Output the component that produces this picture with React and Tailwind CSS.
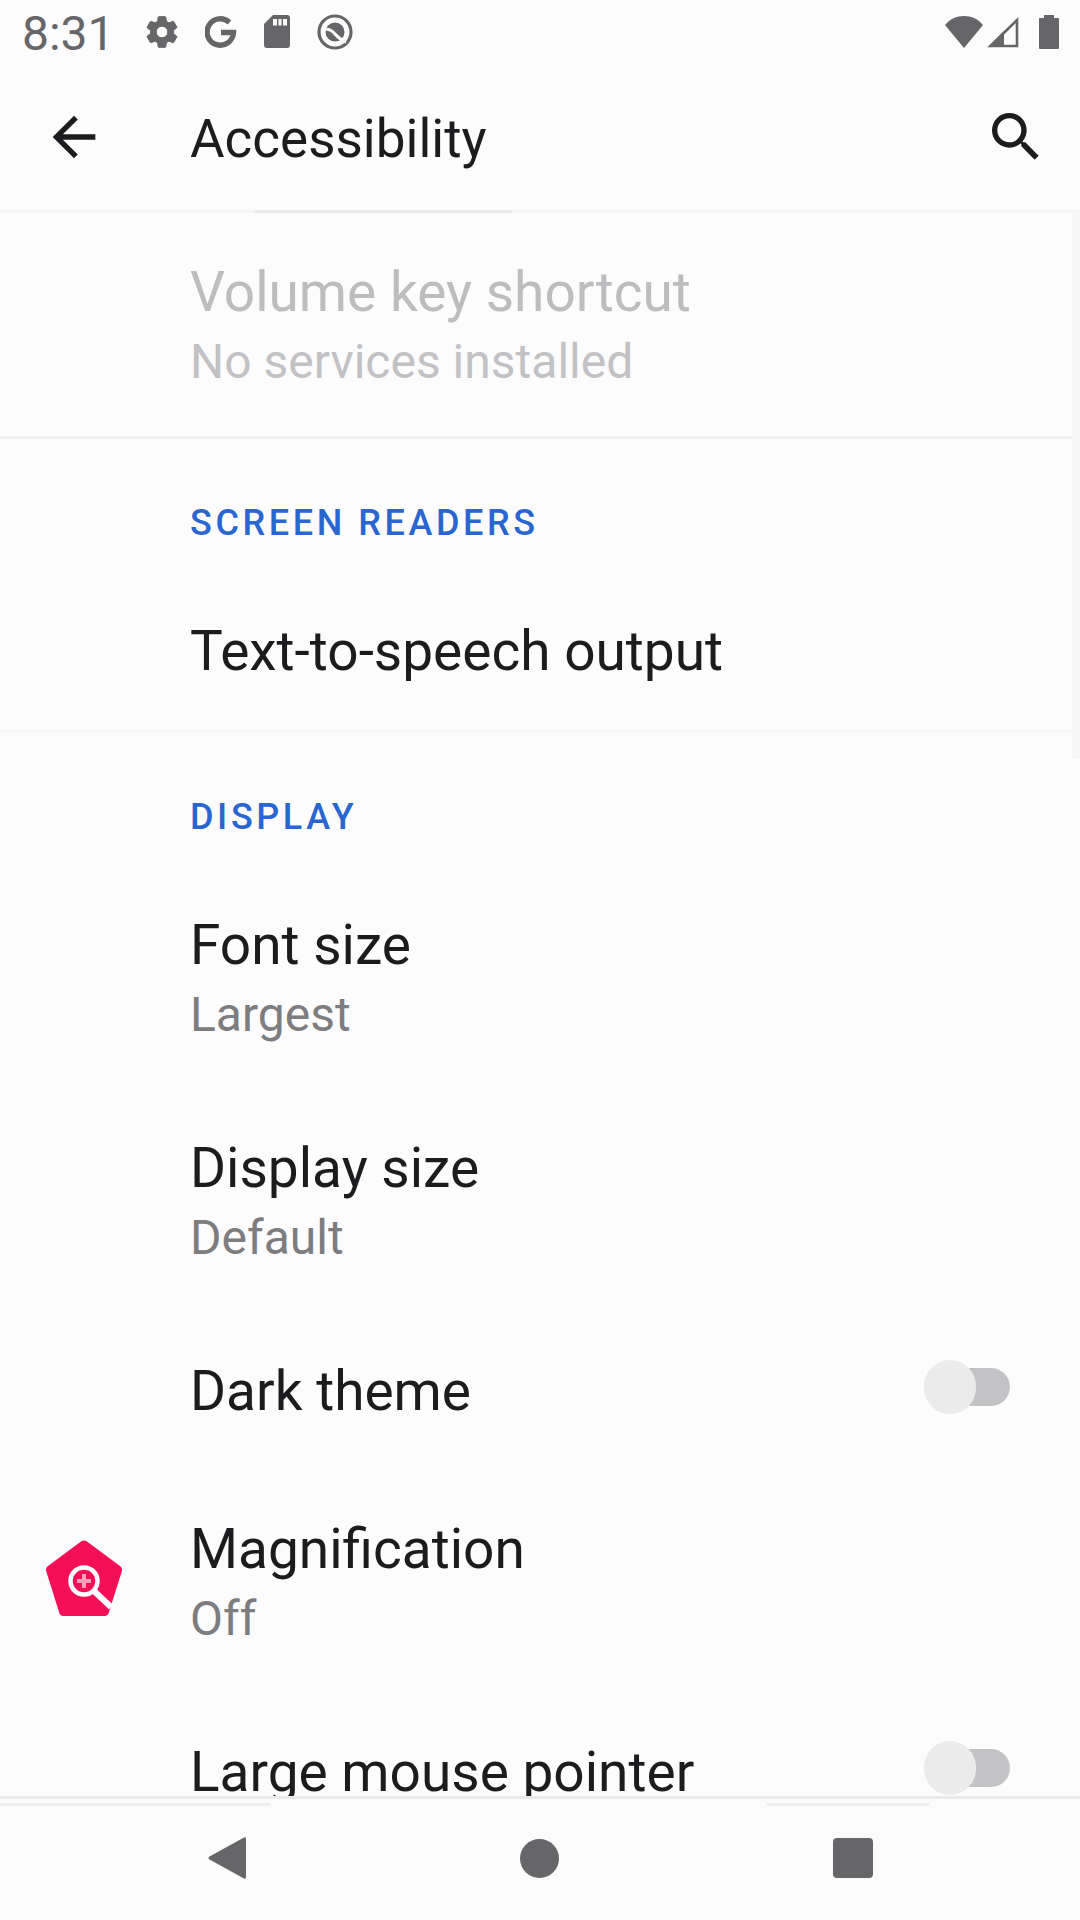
import React from "react";

const GearIcon = () => (
  <svg viewBox="2 2 20 20" className="h-8 w-8" fill="currentColor" stroke="currentColor" strokeWidth="0.6" aria-hidden="true">
    <path d="M19.14 12.94c.04-.3.06-.61.06-.94 0-.32-.02-.64-.07-.94l2.03-1.58c.18-.14.23-.41.12-.61l-1.92-3.32c-.12-.22-.37-.29-.59-.22l-2.39.96c-.5-.38-1.03-.7-1.62-.94l-.36-2.54c-.04-.24-.24-.41-.48-.41h-3.84c-.24 0-.43.17-.47.41l-.36 2.54c-.59.24-1.13.57-1.62.94l-2.39-.96c-.22-.08-.47 0-.59.22L2.74 8.87c-.12.21-.08.47.12.61l2.03 1.58c-.05.3-.09.63-.09.94s.02.64.07.94l-2.03 1.58c-.18.14-.23.41-.12.61l1.92 3.32c.12.22.37.29.59.22l2.39-.96c.5.38 1.03.7 1.62.94l.36 2.54c.05.24.24.41.48.41h3.84c.24 0 .44-.17.47-.41l.36-2.54c.59-.24 1.13-.56 1.62-.94l2.39.96c.22.08.47 0 .59-.22l1.92-3.32c.12-.22.07-.47-.12-.61l-2.01-1.58zM12 15.6c-1.98 0-3.6-1.62-3.6-3.6s1.62-3.6 3.6-3.6 3.6 1.62 3.6 3.6-1.62 3.6-3.6 3.6z" />
  </svg>
);

const GoogleIcon = () => (
  <svg viewBox="0 0 32 32" className="h-8 w-8" fill="none" stroke="currentColor" strokeWidth="5.4" aria-hidden="true">
    <path d="M24.500 6.500A13.200 13.200 0 1 0 28.500 16.500H16" />
  </svg>
);

const SdIcon = () => (
  <svg viewBox="0 0 26 33" className="h-[33px] w-[26px]" aria-hidden="true">
    <path fill="currentColor" d="M9 0h14a3 3 0 0 1 3 3v27a3 3 0 0 1-3 3H3a3 3 0 0 1-3-3V9z" />
    <path fill="#fcfcfd" d="M9 4h4v6.500h-4zM14.500 4h3v6.500h-3zM19 4h4v6.500h-4z" />
  </svg>
);

const TargetIcon = () => (
  <svg viewBox="0 0 36 36" className="h-9 w-9" aria-hidden="true">
    <circle cx="18" cy="18" r="16" fill="none" stroke="currentColor" strokeWidth="3.2" />
    <circle cx="18" cy="18" r="9.5" fill="currentColor" />
    <path fill="none" stroke="#fcfcfd" strokeWidth="3" d="M7 15.500c5-1 8 1 11 4.500s6 6 11 8" />
  </svg>
);

const WifiIcon = () => (
  <svg viewBox="0 0 38 32" className="h-8 w-[38px]" fill="currentColor" aria-hidden="true">
    <path d="M19 0C11.500 0 5 3 0 9l19 23L38 9C33 3 26.500 0 19 0z" />
  </svg>
);

const SignalIcon = () => (
  <svg viewBox="0 0 32 32" className="h-8 w-8" aria-hidden="true">
    <path fill="none" stroke="currentColor" strokeWidth="2.6" d="M3.500 30H30V4z" />
    <path fill="currentColor" d="M1 31h16V15z" />
  </svg>
);

const BatteryIcon = () => (
  <svg viewBox="0 0 20 34" className="h-[34px] w-5" fill="currentColor" aria-hidden="true">
    <path d="M5 0h10v3h4a1 1 0 0 1 1 1v29a1 1 0 0 1-1 1H1a1 1 0 0 1-1-1V4a1 1 0 0 1 1-1h4z" />
  </svg>
);

const BackIcon = () => (
  <svg viewBox="0 0 24 24" className="h-16 w-16" fill="currentColor" aria-hidden="true">
    <path d="M20 11H7.830l5.590-5.590L12 4l-8 8 8 8 1.410-1.410L7.830 13H20v-2z" />
  </svg>
);

const SearchIcon = () => (
  <svg viewBox="0 0 24 24" className="h-16 w-16" fill="currentColor" aria-hidden="true">
    <path d="M15.500 14h-.79l-.28-.27A6.470 6.470 0 0 0 16 9.500 6.500 6.500 0 1 0 9.500 16c1.610 0 3.090-.59 4.230-1.570l.27.28v.79l5 4.990L20.490 19l-4.990-5zm-6 0C7.010 14 5 11.990 5 9.500S7.010 5 9.500 5 14 7.010 14 9.500 11.990 14 9.500 14z" />
  </svg>
);

const MagnificationIcon = () => (
  <svg viewBox="0 0 76 76" className="h-[76px] w-[76px]" aria-hidden="true">
    <path
      fill="#f50f57"
      d="M35 1.500a5 5 0 0 1 6 0L74 26a5 5 0 0 1 1.800 5.500L63 72a5 5 0 0 1-5 4H18a5 5 0 0 1-5-4L.3 31.500A5 5 0 0 1 2 26z"
    />
    <g fill="none" stroke="#fff">
      <circle cx="38" cy="41" r="13.5" strokeWidth="4.5" />
      <path d="M48 51l17 16" strokeWidth="6" />
      <path stroke="#ff9dbc" strokeWidth="4" d="M38 34v14M31 41h14" />
    </g>
  </svg>
);

function Category({ children }) {
  return (
    <h2 className="pt-[58px] pb-[23px] pl-[190px] text-[36px] leading-[52px] font-medium tracking-widest text-[#2a66cf] uppercase">
      {children}
    </h2>
  );
}

function Texts({ title, summary, disabled }) {
  return (
    <span className="min-w-0 flex-1">
      <span className={`block text-[55px] leading-[74px] ${disabled ? "text-[#bdbdc0]" : "text-[#1c1c1f]"}`}>{title}</span>
      {summary && (
        <span className={`block text-[48px] leading-[65px] ${disabled ? "text-[#c2c2c5]" : "text-[#7d7d80]"}`}>{summary}</span>
      )}
    </span>
  );
}

function Row({ icon, disabled, ...texts }) {
  return (
    <button type="button" disabled={disabled} className="flex w-full items-center py-[42px] text-left">
      <span className="flex w-[190px] shrink-0 pb-2 pl-[46px]">{icon}</span>
      <Texts disabled={disabled} {...texts} />
    </button>
  );
}

function SwitchRow({ title }) {
  return (
    <label className="flex w-full items-center py-[42px] pr-[70px] pl-[190px]">
      <Texts title={title} />
      <span className="flex pb-2">
        <input
          type="checkbox"
          role="switch"
          className="relative h-[38px] w-[84px] appearance-none rounded-full bg-[#c3c3c6] before:absolute before:-top-2 before:-left-0.5 before:h-[54px] before:w-[52px] before:rounded-full before:bg-[#ebebec] before:content-['']"
        />
      </span>
    </label>
  );
}

export default function App() {
  return (
    <div className="flex h-screen flex-col overflow-hidden bg-[#fcfcfd] font-[Roboto,sans-serif]">
      <div className="flex h-[63px] shrink-0 items-center justify-between pr-[21px] pl-[22px] text-[#666669]">
        <div className="flex items-center">
          <time className="w-[124px] pt-1 text-[48px] leading-[60px]">8:31</time>
          <div className="flex items-center gap-[27px]">
            <GearIcon />
            <GoogleIcon />
            <SdIcon />
            <TargetIcon />
          </div>
        </div>
        <div className="flex items-center">
          <WifiIcon />
          <span className="mr-5 ml-1">
            <SignalIcon />
          </span>
          <BatteryIcon />
        </div>
      </div>

      <header className="flex h-[147px] shrink-0 items-center pr-8 pl-[42px] text-[#1c1c1f]">
        <button type="button" aria-label="Navigate up" className="w-[148px]">
          <BackIcon />
        </button>
        <h1 className="flex-1 pt-1 text-[53px] leading-[74px]">Accessibility</h1>
        <button type="button" aria-label="Search settings">
          <SearchIcon />
        </button>
      </header>
      <div className="flex h-[3px] shrink-0 bg-[#f5f5f6]">
        <div className="ml-[23.6%] w-[23.8%] bg-[#e9e9ec]" />
      </div>

      <main className="relative min-h-0 flex-1 overflow-hidden">
        <section className="border-b-3 border-[#f0f0f1]">
          <Row title="Volume key shortcut" summary="No services installed" disabled />
        </section>
        <section className="border-b-3 border-[#f8f8f9]">
          <Category>Screen readers</Category>
          <Row title="Text-to-speech output" />
        </section>
        <section>
          <Category>Display</Category>
          <Row title="Font size" summary="Largest" />
          <Row title="Display size" summary="Default" />
          <SwitchRow title="Dark theme" />
          <Row title="Magnification" summary="Off" icon={<MagnificationIcon />} />
          <SwitchRow title="Large mouse pointer" />
        </section>
        <div className="absolute top-0 right-0 h-[546px] w-2 bg-[#f7f7f8]" />
      </main>

      <nav className="shrink-0 border-t-3 border-[#e9e9ec] bg-[#fbfbfc] pb-2.5 text-[#666669]">
        <div className="flex h-[7px] pt-1">
          <div className="w-[25%] bg-[#eeeef0]" />
          <div className="ml-[46%] w-[15%] bg-[#eeeef0]" />
        </div>
        <div className="grid h-[104px] grid-cols-3 px-[70px]">
          <button type="button" aria-label="Back" className="flex items-center justify-center">
            <svg viewBox="0 0 38 44" className="h-11 w-[38px]" fill="currentColor" aria-hidden="true">
              <path d="M36 1.500Q38 .5 38 3v38q0 2.500-2 1.500L1.500 23.500q-2-1.500 0-3z" />
            </svg>
          </button>
          <button type="button" aria-label="Home" className="flex items-center justify-center">
            <span className="h-[39px] w-[39px] rounded-full bg-current" />
          </button>
          <button type="button" aria-label="Recent apps" className="flex items-center justify-center">
            <span className="h-10 w-10 rounded-sm bg-current" />
          </button>
        </div>
      </nav>
    </div>
  );
}
